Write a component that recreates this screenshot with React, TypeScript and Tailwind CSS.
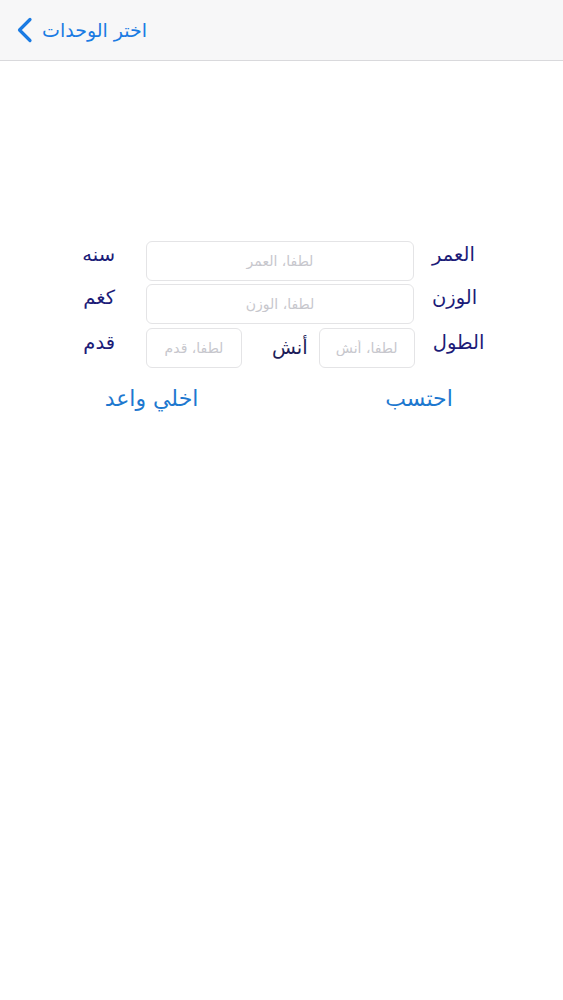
import React from 'react';

const font = { fontFamily: '"DejaVu Sans", "Noto Sans", sans-serif' };

const Field: React.FC<{ placeholder: string; className: string }> = ({ placeholder, className }) => (
  <input
    dir="rtl"
    placeholder={placeholder}
    className={`h-10 rounded-md border border-[#e4e4e6] bg-white px-2 text-center text-[14px] text-[#333] placeholder:text-[#c7c7cd] outline-none ${className}`}
    style={font}
  />
);

const App: React.FC = () => {
  return (
    <div className="min-h-screen w-full bg-white" style={font}>
      {/* nav bar */}
      <div className="flex h-[61px] items-center border-b border-[#d9d9dc] bg-[#f7f7f8] pl-[16px]">
        <svg width="18" height="26" viewBox="0 0 18 26" className="shrink-0">
          <path d="M14 2.5 L3.5 13 L14 23.5" fill="none" stroke="#1a7be3" strokeWidth="3.2" strokeLinecap="round" strokeLinejoin="round" />
        </svg>
        <span className="ml-[8px] text-[19px] text-[#1a7be3]">اختر الوحدات</span>
      </div>

      {/* form */}
      <div className="flex flex-col pt-[180px]">
        <div className="flex h-10 items-center">
          <span className="mb-[12px] w-[115px] text-right text-[19.5px] text-[#1c1c78]">سنه</span>
          <Field placeholder="لطفا، العمر" className="ml-[31px] w-[268px]" />
          <span className="mb-[12px] ml-[18px] text-[19.5px] text-[#1c1c78]">العمر</span>
        </div>
        <div className="mt-[3px] flex h-10 items-center">
          <span className="mb-[12px] w-[115px] text-right text-[19.5px] text-[#1c1c78]">كغم</span>
          <Field placeholder="لطفا، الوزن" className="ml-[31px] w-[268px]" />
          <span className="mb-[12px] ml-[18px] text-[19.5px] text-[#1c1c78]">الوزن</span>
        </div>
        <div className="mt-[4px] flex h-10 items-center">
          <span className="mb-[10px] w-[115px] text-right text-[19.5px] text-[#1c1c78]">قدم</span>
          <Field placeholder="لطفا، قدم" className="ml-[31px] w-[96px]" />
          <span className="ml-[30px] text-[19.5px] text-[#1c1c58]">أنش</span>
          <Field placeholder="لطفا، أنش" className="ml-[11px] w-[96px]" />
          <span className="mb-[10px] ml-[18px] text-[19.5px] text-[#1c1c78]">الطول</span>
        </div>

        <div className="mt-[14px] flex items-center">
          <button className="ml-[101px] w-[101px] text-[22px] text-[#1d78cf]">اخلي واعد</button>
          <button className="ml-[180px] w-[74px] text-[22px] text-[#1d78cf]">احتسب</button>
        </div>
      </div>
    </div>
  );
};

export default App;
